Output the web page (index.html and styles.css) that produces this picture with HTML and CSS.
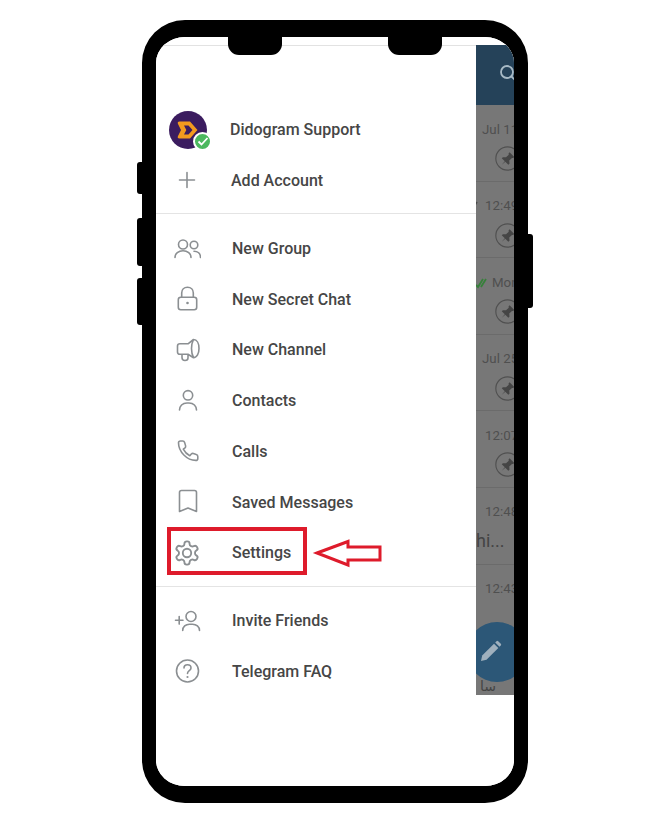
FILE: index.html
```html
<!DOCTYPE html>
<html lang="en">
<head>
<meta charset="utf-8">
<title>Telegram menu</title>
<link rel="stylesheet" href="styles.css">
</head>
<body>
<svg class="defs" width="0" height="0" aria-hidden="true">
  <symbol id="pin" viewBox="0 0 24 24">
    <circle cx="12" cy="12" r="11.2" fill="none" stroke="#505050" stroke-width="1.1"/>
    <path d="M14 6l4.500 4.500-1.200 1.100-1-.2-2.600 2.600.2 3-1.100 1.100-2.900-2.900-3.400 2.900 2.900-3.400-2.900-2.900 1.100-1.100 3 .2 2.600-2.600-.2-1z" fill="#454545"/>
  </symbol>
</svg>
<div class="frame">
  <span class="btn btn-l1"></span>
  <span class="btn btn-l2"></span>
  <span class="btn btn-l3"></span>
  <span class="btn btn-r"></span>
  <span class="notch notch-a"></span>
  <span class="notch notch-b"></span>
  <div class="screen">
    <div class="app">
      <nav class="drawer">
        <div class="row row-account">
          <span class="avatar">
            <svg width="38" height="38" viewBox="0 0 38 38"><circle cx="19" cy="19" r="19" fill="#3b1c5f"/><path d="M10.500 10.500h10.500l7.500 8.500-7.500 8.500H10.500q-2.500 0-1.500-2.500l3-6-3-6q-1-2.500 1.500-2.500z" fill="#f39a1e"/><path d="M15 14.500h4.500l4 4.500-4 4.500H15l2.300-4.500z" fill="#3b1c5f"/></svg>
            <span class="badge"><svg width="14" height="14" viewBox="0 0 14 14"><path d="M2.500 7.500l3 3 6-6.500" fill="none" stroke="#fff" stroke-width="1.800"/></svg></span>
          </span>
          <span>Didogram Support</span>
        </div>
        <div class="row row-add">
          <svg class="icon" viewBox="0 0 28 28"><path d="M14 6.500v15M6.500 14h15"/></svg>
          <span>Add Account</span>
        </div>
        <hr class="rule rule-a">
        <div class="row">
          <svg class="icon" viewBox="0 0 28 28"><circle cx="10" cy="9.500" r="4.500"/><circle cx="21" cy="10" r="3.800"/><path d="M2 22.500c0-4 3.500-6.800 8-6.800s8 2.800 8 6.800M21 16.200c3.700 0 6.500 2.500 6.500 6.300"/></svg>
          <span>New Group</span>
        </div>
        <div class="row">
          <svg class="icon" viewBox="0 0 28 28"><rect x="5.300" y="12.200" width="18.400" height="12.600" rx="2.500"/><path d="M8.700 12V8c0-3.400 2.400-5.800 5.800-5.800s5.800 2.400 5.800 5.800v4"/><circle class="dot" cx="14.500" cy="18" r="1.300"/></svg>
          <span>New Secret Chat</span>
        </div>
        <div class="row">
          <svg class="icon" viewBox="0 0 28 28"><path d="M20.500 3.500L15 7.800H7Q4.500 7.800 4.500 10v6q0 2.300 2.500 2.300h8l5.500 3.400M20.500 3.500c3.500 0 5.500 4 5.500 9s-2 9.200-5.500 9.200c-1.500-3-2-6-2-9.200s.5-6 2-9zM9 18.500v3c0 2 1.500 3 3 3s3-1 3-2.500v-3"/></svg>
          <span>New Channel</span>
        </div>
        <div class="row">
          <svg class="icon" viewBox="0 0 28 28"><circle cx="15" cy="8.300" r="4.700"/><path d="M6.500 23c0-4 3-7 7.500-7h2c4.500 0 7.500 3 7.500 7"/></svg>
          <span>Contacts</span>
        </div>
        <div class="row">
          <svg class="icon" viewBox="0 0 28 28"><path d="M5.500 5.800C5.500 4.700 6.500 4 7.500 4h2.300c.9 0 1.500.5 1.800 1.400l1 3.500c.2.8 0 1.400-.6 2l-1.700 1.300c1.500 3 3.500 5 6.500 6.500l1.500-1.700c.6-.6 1.300-.8 2-.6l3 1c1 .3 1.500 1 1.500 2v2c0 1.200-1 2-2 2C14 23.400 5.500 14.800 5.500 5.800z"/></svg>
          <span>Calls</span>
        </div>
        <div class="row">
          <svg class="icon" viewBox="0 0 28 28"><path d="M6.500 23.500V4.500q0-2 2-2h13q2 0 2 2v19l-8.500-3.500z"/></svg>
          <span>Saved Messages</span>
        </div>
        <div class="row row-settings">
          <svg class="icon" viewBox="0 0 24 24"><path d="M12.220 2h-.44a2 2 0 0 0-2 2v.18a2 2 0 0 1-1 1.730l-.43.25a2 2 0 0 1-2 0l-.15-.08a2 2 0 0 0-2.730.73l-.22.38a2 2 0 0 0 .73 2.730l.15.1a2 2 0 0 1 1 1.720v.51a2 2 0 0 1-1 1.740l-.15.09a2 2 0 0 0-.73 2.730l.22.38a2 2 0 0 0 2.730.73l.15-.08a2 2 0 0 1 2 0l.43.25a2 2 0 0 1 1 1.730V20a2 2 0 0 0 2 2h.44a2 2 0 0 0 2-2v-.18a2 2 0 0 1 1-1.730l.43-.25a2 2 0 0 1 2 0l.15.08a2 2 0 0 0 2.730-.73l.22-.39a2 2 0 0 0-.73-2.730l-.15-.08a2 2 0 0 1-1-1.740v-.5a2 2 0 0 1 1-1.740l.15-.09a2 2 0 0 0 .73-2.730l-.22-.38a2 2 0 0 0-2.730-.73l-.15.08a2 2 0 0 1-2 0l-.43-.25a2 2 0 0 1-1-1.730V4a2 2 0 0 0-2-2z"/><circle cx="12" cy="12" r="3.600"/></svg>
          <span>Settings</span>
          <span class="highlight"></span>
          <svg class="arrow" width="72" height="34" viewBox="0 0 72 34"><path d="M5 17L36 5.500V11H68V24H36V29z"/></svg>
        </div>
        <hr class="rule rule-b">
        <div class="row">
          <svg class="icon" viewBox="0 0 28 28"><path d="M2.500 13.300h7.500M6.200 9.500v7.600"/><circle cx="18" cy="9.500" r="5"/><path d="M9.700 23.500c0-3.800 3-6.300 6.800-6.300h3c3.800 0 7 2.500 7 6.300"/></svg>
          <span>Invite Friends</span>
        </div>
        <div class="row">
          <svg class="icon" viewBox="0 0 28 28"><circle cx="14.500" cy="14" r="11"/><path d="M11 11c0-2 1.500-3.300 3.500-3.300s3.500 1.300 3.500 3.200c0 2.800-3.500 2.800-3.500 5.600"/><circle class="dot" cx="14.500" cy="20" r="1.100"/></svg>
          <span>Telegram FAQ</span>
        </div>
      </nav>
      <aside class="peek">
        <header class="peek-head">
          <svg class="search" width="24" height="24" viewBox="0 0 24 24"><circle cx="10" cy="10" r="6"/><path d="M14.500 14.500L20 20"/></svg>
        </header>
        <div class="chat">
          <span class="time t-jul">Jul 11</span>
          <svg class="pin"><use href="#pin"/></svg>
        </div>
        <div class="chat">
          <span class="time t-num"><svg class="tick" width="12" height="12" viewBox="0 0 12 12"><path d="M2 10L7 2"/></svg>12:49</span>
          <svg class="pin"><use href="#pin"/></svg>
        </div>
        <div class="chat">
          <span class="time t-mon"><svg class="tick tick-green" width="14" height="12" viewBox="0 0 14 12"><path d="M1 8l2 2 5-8M6 10l5-8"/></svg>Mon</span>
          <svg class="pin"><use href="#pin"/></svg>
        </div>
        <div class="chat">
          <span class="time t-jul">Jul 25</span>
          <svg class="pin"><use href="#pin"/></svg>
        </div>
        <div class="chat">
          <span class="time t-num">12:07</span>
          <svg class="pin"><use href="#pin"/></svg>
        </div>
        <div class="chat">
          <span class="time t-num">12:48</span>
          <span class="snippet">hi...</span>
        </div>
        <div class="chat chat-last">
          <span class="time t-num">12:43</span>
        </div>
        <span class="arabic" lang="ar" dir="rtl">سا</span>
        <span class="fab">
          <svg width="28" height="28" viewBox="0 0 28 28"><path d="M5 23l1.200-5.500L18 5.700l4.300 4.300L10.500 21.800z" fill="#9fb0bd"/><path d="M19.200 4.500l1.300-1.300a1.200 1.200 0 0 1 1.700 0l2.600 2.600a1.200 1.200 0 0 1 0 1.700l-1.300 1.300z" fill="#9fb0bd"/></svg>
        </span>
      </aside>
    </div>
  </div>
</div>
</body>
</html>
```

FILE: styles.css
```css
* { box-sizing: border-box; }

html, body { margin: 0; height: 100%; background: #fff; }

body {
  display: flex;
  justify-content: center;
  padding-top: 20px;
  font-family: Roboto, "Liberation Sans", sans-serif;
  overflow: hidden;
}

.defs { position: absolute; }

.frame {
  position: relative;
  width: 386px;
  height: 783px;
  border: solid #000;
  border-width: 17px 14px;
  border-radius: 43px;
  background: #fff;
}

.btn {
  position: absolute;
  width: 6px;
  background: #000;
}
.btn-l1 { left: -19px; top: 125px; height: 32px; border-radius: 3px 0 0 3px; }
.btn-l2 { left: -19px; top: 181px; height: 48px; border-radius: 3px 0 0 3px; }
.btn-l3 { left: -19px; top: 241px; height: 47px; border-radius: 3px 0 0 3px; }
.btn-r { right: -19px; top: 197px; height: 74px; border-radius: 0 3px 3px 0; }

.notch {
  position: absolute;
  top: 0;
  width: 54px;
  height: 18px;
  background: #000;
  border-radius: 0 0 11px 11px;
  z-index: 2;
}
.notch-a { left: 72px; }
.notch-b { left: 232px; }

.screen {
  height: 100%;
  padding-top: 8px;
  border-radius: 29px 29px 29px 29px / 26px;
  overflow: hidden;
  background: #fff;
}

.app {
  display: flex;
  height: 650px;
}

.drawer {
  width: 320px;
  flex: none;
  padding-top: 58.3px;
  border-top: 1px solid #e2e2e2;
  color: #464646;
  font-size: 16px;
  font-weight: 500;
}

.row {
  position: relative;
  display: flex;
  align-items: center;
  height: 50.7px;
  padding-left: 17px;
  gap: 31px;
}

.row-account { padding-left: 13px; gap: 23px; }
.row-add { gap: 30px; }

.icon {
  width: 28px;
  height: 28px;
  flex: none;
  fill: none;
  stroke: #8b8f92;
  stroke-width: 1.6;
  stroke-linecap: round;
  stroke-linejoin: round;
}
.icon .dot { fill: #8b8f92; stroke: none; }

.avatar { position: relative; display: block; width: 38px; height: 38px; }
.avatar > svg { display: block; }

.badge {
  position: absolute;
  left: 24px;
  top: 21px;
  width: 19px;
  height: 19px;
  display: flex;
  align-items: center;
  justify-content: center;
  border: 2px solid #fff;
  border-radius: 50%;
  background: #4cb85f;
}

.rule {
  height: 1px;
  margin: 0;
  border: 0;
  background: #e4e4e4;
}
.rule-a { margin: 7.3px 0 9.300px; }
.rule-b { margin: 8px 0 8.300px; }

.highlight {
  position: absolute;
  left: 11px;
  top: 0;
  width: 140px;
  height: 48px;
  border: 4px solid #de1b2b;
}

.arrow {
  position: absolute;
  left: 156px;
  top: 9px;
  fill: #fff;
  stroke: #de1b2b;
  stroke-width: 3;
  stroke-linejoin: miter;
}

.peek {
  position: relative;
  flex: 1;
  background: #777;
  overflow: hidden;
}

.peek-head {
  height: 60px;
  background: #254259;
  position: relative;
  padding: 17px 0 0 21px;
}

.search { fill: none; stroke: #a8bac6; stroke-width: 1.800; display: block; }

.chat {
  position: relative;
  height: 76.6px;
  border-bottom: 1px solid #6b6b6b;
  color: #4f4f4f;
  font-size: 13.300px;
  line-height: 18px;
  white-space: nowrap;
}
.chat-last { border-bottom: 0; }

.time {
  position: absolute;
  top: 15.5px;
  display: flex;
  align-items: center;
}
.t-jul { left: 6px; }
.t-num { left: 9px; }
.t-mon { left: 16px; }

.tick {
  position: absolute;
  right: 100%;
  margin-right: 3px;
  fill: none;
  stroke: #484848;
  stroke-width: 1.500;
}
.tick-green { stroke: #36803a; stroke-width: 1.800; }

.pin {
  position: absolute;
  left: 19px;
  top: 41px;
  width: 25px;
  height: 25px;
}

.snippet {
  position: absolute;
  left: 0;
  top: 42px;
  font-size: 18px;
  line-height: 22px;
  color: #444;
}

.arabic {
  position: absolute;
  left: 0;
  top: 632px;
  width: 20px;
  font: 14px/18px "DejaVu Sans", sans-serif;
  color: #444;
}

.fab {
  position: absolute;
  left: -9px;
  top: 577px;
  width: 60px;
  height: 60px;
  border-radius: 50%;
  background: #2c5777;
  display: flex;
  align-items: center;
  justify-content: center;
  padding-right: 14px;
}
```
